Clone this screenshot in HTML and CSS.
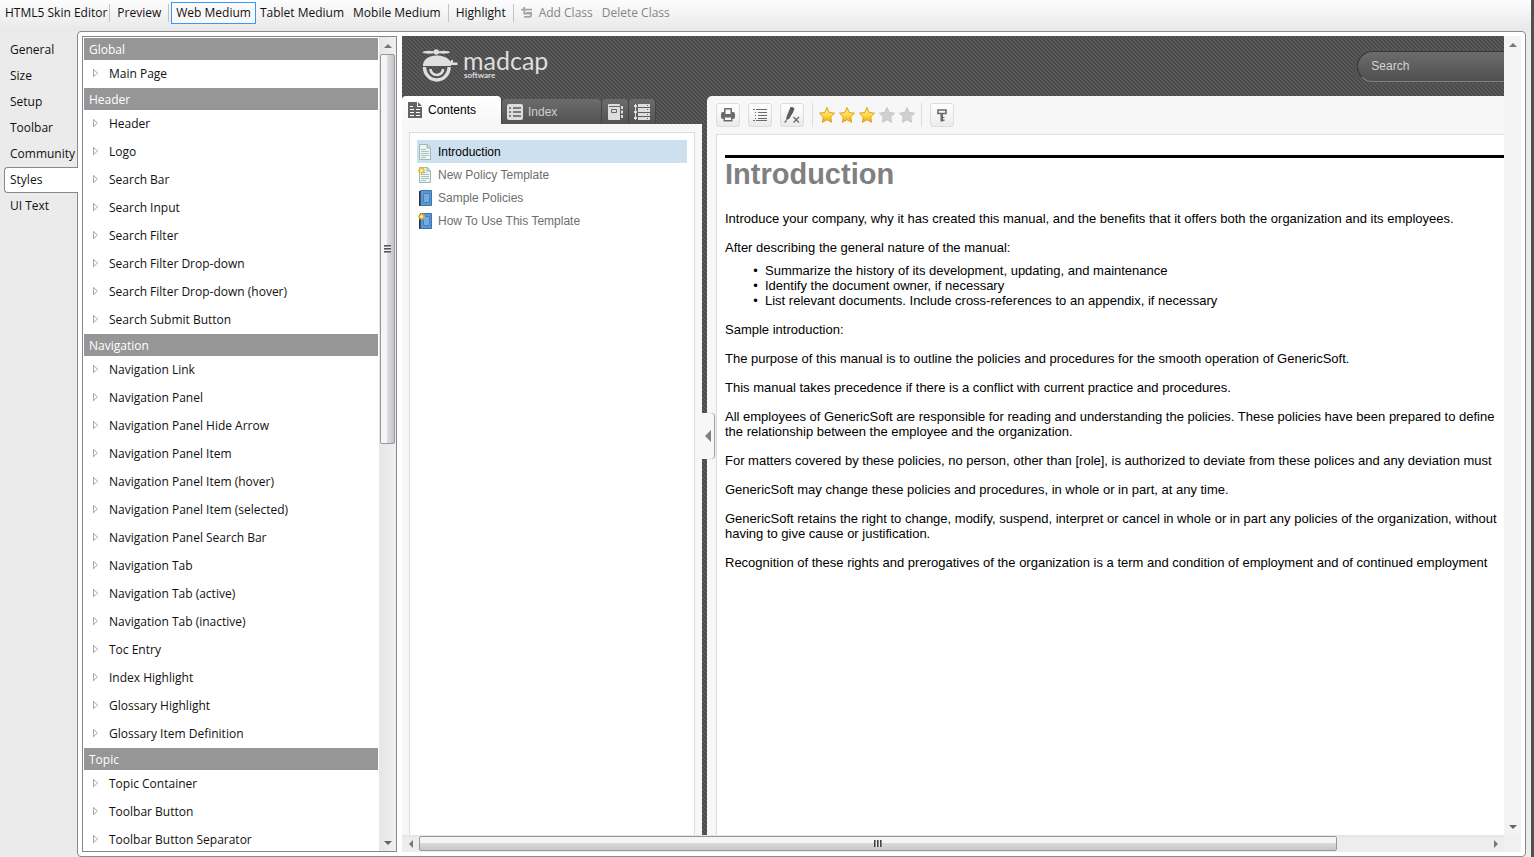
FILE: index.html
```html
<!DOCTYPE html>
<html lang="en">
<head>
<meta charset="utf-8">
<title>HTML5 Skin Editor</title>
<link rel="stylesheet" href="styles.css">
</head>
<body>
<div class="app">
  <header class="toolbar">
    <span class="tool-title">HTML5 Skin Editor</span>
    <span class="tool-sep"></span>
    <button class="tool" type="button">Preview</button>
    <span class="tool-sep"></span>
    <button class="tool tool-active" type="button">Web Medium</button>
    <button class="tool" type="button">Tablet Medium</button>
    <button class="tool" type="button">Mobile Medium</button>
    <span class="tool-sep"></span>
    <button class="tool" type="button">Highlight</button>
    <span class="tool-sep"></span>
    <button class="tool" type="button" disabled>
      <svg class="tool-icon" width="12" height="12" viewBox="0 0 12 12" fill="none" stroke="#a4a4a4" stroke-width="1.8"><path d="M0 2.700h11M3.300 0v6.500h5.500q1.500 0 1.500 1.500t-1.500 1.800H3M6 6h5"/></svg>Add Class</button>
    <button class="tool" type="button" disabled>Delete Class</button>
  </header>

  <div class="workspace">
    <nav class="side-tabs">
      <button class="side-tab" type="button">General</button>
      <button class="side-tab" type="button">Size</button>
      <button class="side-tab" type="button">Setup</button>
      <button class="side-tab" type="button">Toolbar</button>
      <button class="side-tab" type="button">Community</button>
      <button class="side-tab side-tab-active" type="button">Styles</button>
      <button class="side-tab" type="button">UI Text</button>
    </nav>

    <main class="panel">
      <section class="style-list">
        <div class="style-items">
          <h2 class="group">Global</h2>
          <ul class="entries"><li>Main Page</li></ul>
          <h2 class="group">Header</h2>
          <ul class="entries">
            <li>Header</li><li>Logo</li><li>Search Bar</li><li>Search Input</li><li>Search Filter</li>
            <li>Search Filter Drop-down</li><li>Search Filter Drop-down (hover)</li><li>Search Submit Button</li>
          </ul>
          <h2 class="group">Navigation</h2>
          <ul class="entries">
            <li>Navigation Link</li><li>Navigation Panel</li><li>Navigation Panel Hide Arrow</li>
            <li>Navigation Panel Item</li><li>Navigation Panel Item (hover)</li><li>Navigation Panel Item (selected)</li>
            <li>Navigation Panel Search Bar</li><li>Navigation Tab</li><li>Navigation Tab (active)</li>
            <li>Navigation Tab (inactive)</li><li>Toc Entry</li><li>Index Highlight</li>
            <li>Glossary Highlight</li><li>Glossary Item Definition</li>
          </ul>
          <h2 class="group">Topic</h2>
          <ul class="entries"><li>Topic Container</li><li>Toolbar Button</li><li>Toolbar Button Separator</li></ul>
        </div>
        <div class="vbar">
          <span class="arrow up"></span>
          <div class="vtrack"><div class="vthumb"><span class="grip"></span></div></div>
          <span class="arrow down"></span>
        </div>
      </section>

      <section class="preview">
        <div class="viewport">
          <div class="page">
            <header class="page-head">
              <svg class="logo" width="128" height="36" viewBox="0 0 128 36">
                <g fill="#dedede">
                  <ellipse cx="7" cy="3.200" rx="6.500" ry="1.500"/><ellipse cx="21.500" cy="3.200" rx="6.500" ry="1.500"/>
                  <circle cx="14.300" cy="3" r="2.700"/>
                  <path d="M1 15.500C2 10 7 6.500 14.300 6.500S26 9 28.500 12.500l1-1.500h1.500v2.500h4.500v2.500H29v1H1z"/>
                </g>
                <path fill="none" stroke="#dedede" stroke-width="3.400" d="M2.500 18a12.300 13 0 0 0 24.600 0"/>
                <path fill="none" stroke="#dedede" stroke-width="2.600" d="M8.500 20a6.300 6 0 0 0 12.600 0"/>
                <text class="logo-name" x="41" y="21">madcap</text>
                <text class="logo-sub" x="42" y="29">software</text>
              </svg>
              <input class="search" type="text" placeholder="Search" aria-label="Search">
            </header>
            <div class="page-body">
              <aside class="nav">
                <div class="nav-tabs">
                  <button class="nav-tab nav-tab-active" type="button">
                    <svg width="14" height="16" viewBox="0 0 14 16"><path fill="#646464" d="M0 0h9v5h5v11H0zM10 0l4 4h-4z"/><path stroke="#fff" d="M2 4.500h3M2 7.500h4M2 10.500h4M2 13.500h4M8 7.500h4M8 10.500h4M8 13.500h4"/></svg>Contents</button>
                  <button class="nav-tab nav-tab-index" type="button">
                    <svg width="16" height="16" viewBox="0 0 16 16"><rect width="16" height="16" rx="2" fill="#dedede"/><path stroke="#5c5c5c" stroke-width="1.500" d="M2 4h2M6 4h8M2 8h2M6 8h8M2 12h2M6 12h8"/></svg>Index</button>
                  <button class="nav-tab nav-tab-small" type="button" aria-label="Glossary">
                    <svg width="15" height="16" viewBox="0 0 15 16"><path fill="#dedede" d="M1 0h10q1 0 1 1v1H1v1h11v13H1q-1 0-1-1V1q0-1 1-1zM13 2h2v3h-2zM13 6.500h2v3h-2zM13 11h2v3h-2z"/><path fill="none" stroke="#666" d="M3.500 5.500h5v3h-5z"/></svg></button>
                  <button class="nav-tab nav-tab-small" type="button" aria-label="Browse sequences">
                    <svg width="16" height="16" viewBox="0 0 16 16"><path stroke="#dedede" d="M1.500 0v16"/><path fill="#dedede" d="M0 1h3v2H0zM0 7h3v2H0zM0 13h3v2H0zM4 0h12v3H4zM4 4h12v4H4zM4 9h12v3H4zM4 13h12v3H4z"/><path stroke="#666" d="M13 1.500h1M13 5.500h1M13 10.500h1M13 14.500h1"/></svg></button>
                </div>
                <div class="nav-panel">
                  <div class="toc">
                    <a class="toc-item toc-current" href="#"><svg width="14" height="16" viewBox="0 0 14 16"><use href="#sheet"/></svg>Introduction</a>
                    <a class="toc-item" href="#"><svg width="14" height="16" viewBox="0 0 14 16"><use href="#sheet"/><use href="#spark"/></svg>New Policy Template</a>
                    <a class="toc-item" href="#"><svg width="14" height="16" viewBox="0 0 14 16"><use href="#book"/></svg>Sample Policies</a>
                    <a class="toc-item" href="#"><svg width="14" height="16" viewBox="0 0 14 16"><use href="#book"/><use href="#spark"/></svg>How To Use This Template</a>
                  </div>
                </div>
                <button class="collapse" type="button" aria-label="Hide navigation"></button>
              </aside>
              <div class="topic">
                <div class="topic-tools">
                  <button class="tbtn" type="button" aria-label="Print"><svg width="14" height="14" viewBox="0 0 14 14"><path fill="#6a6a6a" d="M3 1q0-1 1-1h6q1 0 1 1v3h1q2 0 2 2v3q0 2-2 2H2q-2 0-2-2V6q0-2 2-2h1z"/><path fill="#f6f6f6" d="M4.500 1.500h5V6h-5z"/><path fill="#f6f6f6" stroke="#6a6a6a" stroke-width="1.400" d="M3.200 8.700h7.600v4H3.200z"/></svg></button>
                  <button class="tbtn" type="button" aria-label="Expand all"><svg width="14" height="14" viewBox="0 0 14 14"><path stroke="#6a6a6a" d="M0 1.500h2M3 1.500h11M2 4.500h1M5 4.500h9M2 7.500h1M5 7.500h9M2 10.500h1M5 10.500h9M0 12.500h2M3 12.500h11"/></svg></button>
                  <button class="tbtn" type="button" aria-label="Remove highlight"><svg width="16" height="16" viewBox="0 0 16 16"><path fill="#5c5c5c" d="M6.500 0h2l2 1.500-1.500 4L5 12l-3 1 .5-3zM1 14l1-1 1 1-1.500 1.500H0z"/><path stroke="#6a6a6a" stroke-width="1.300" d="M9.500 10l5.500 5.500M15 10l-5.500 5.500"/></svg></button>
                  <span class="tsep"></span>
                  <span class="stars">
                    <svg class="star on" viewBox="0 0 16 16"><use href="#star"/></svg>
                    <svg class="star on" viewBox="0 0 16 16"><use href="#star"/></svg>
                    <svg class="star on" viewBox="0 0 16 16"><use href="#star"/></svg>
                    <svg class="star" viewBox="0 0 16 16"><use href="#star"/></svg>
                    <svg class="star" viewBox="0 0 16 16"><use href="#star"/></svg>
                  </span>
                  <span class="tsep"></span>
                  <button class="tbtn" type="button" aria-label="Highlight"><svg width="10" height="13" viewBox="0 0 10 13"><path fill="none" stroke="#6a6a6a" stroke-width="1.600" d="M1 1h8v3.500H1z"/><path fill="#6a6a6a" d="M3.500 5H6v7.500H3.500zM6 8h1.500v1H6zM6 10.500h1.500v1.500H6z"/></svg></button>
                </div>
                <article class="content">
                  <h1>Introduction</h1>
                  <p>Introduce your company, why it has created this manual, and the benefits that it offers both the organization and its employees.</p>
                  <p class="lead">After describing the general nature of the manual:</p>
                  <ul>
                    <li>Summarize the history of its development, updating, and maintenance</li>
                    <li>Identify the document owner, if necessary</li>
                    <li>List relevant documents. Include cross-references to an appendix, if necessary</li>
                  </ul>
                  <p>Sample introduction:</p>
                  <p>The purpose of this manual is to outline the policies and procedures for the smooth operation of GenericSoft.</p>
                  <p>This manual takes precedence if there is a conflict with current practice and procedures.</p>
                  <p>All employees of GenericSoft are responsible for reading and understanding the policies. These policies have been prepared to define<br>the relationship between the employee and the organization.</p>
                  <p>For matters covered by these policies, no person, other than [role], is authorized to deviate from these polices and any deviation must</p>
                  <p>GenericSoft may change these policies and procedures, in whole or in part, at any time.</p>
                  <p>GenericSoft retains the right to change, modify, suspend, interpret or cancel in whole or in part any policies of the organization, without<br>having to give cause or justification.</p>
                  <p>Recognition of these rights and prerogatives of the organization is a term and condition of employment and of continued employment</p>
                </article>
              </div>
            </div>
          </div>
        </div>
        <div class="vbar vbar-idle"><span class="arrow up"></span><span class="arrow down"></span></div>
        <div class="hbar">
          <span class="arrow left"></span>
          <div class="htrack"><div class="hthumb"><span class="hgrip"></span></div></div>
          <span class="arrow right"></span>
        </div>
        <div class="corner"></div>
      </section>
    </main>
  </div>
</div>

<svg class="defs" width="0" height="0" aria-hidden="true">
  <defs>
    <linearGradient id="gold" x1="0" y1="0" x2="0" y2="1"><stop offset="0" stop-color="#ffe880"/><stop offset=".5" stop-color="#ffdc55"/><stop offset="1" stop-color="#f5a800"/></linearGradient>
    <path id="star" d="M8 .6l2.300 4.900 5.200.7-3.800 3.700.9 5.400L8 12.700l-4.600 2.600.9-5.400L.5 6.200l5.200-.7z"/>
    <g id="sheet"><path fill="#eef5f3" stroke="#9bb8b4" d="M1.500.5h8l3 3v12h-11z"/><path fill="#cfe0dc" stroke="#8fb5b0" d="M9 1v3h3"/><path stroke="#a5c4bf" d="M3 5.500h5M3 7.500h8M3 9.500h8M3 11.500h8M3 13.500h5"/></g>
    <g id="book"><path fill="#5b97d2" stroke="#3b72b0" d="M2.500.5h11v15h-11z"/><path fill="#30343c" d="M1 1h1.500v15H1z"/><path fill="#74ace0" stroke="#4680be" d="M5.500 3.500h6v9h-6z"/></g>
    <g id="spark"><path stroke="#e6b820" stroke-width="1.300" d="M3.500 0v7M0 3.500h7M1 1l5 5M6 1L1 6"/><circle cx="3.500" cy="3.500" r="1.500" fill="#fff6b0"/></g>
  </defs>
</svg>
</body>
</html>
```
FILE: styles.css
```css
* { box-sizing: border-box; }
body { margin: 0; font: 12px/16px "Open Sans", "Noto Sans", sans-serif; color: #111; background: #ebebeb; }
button { font: inherit; color: inherit; background: none; border: 0; padding: 0; margin: 0; }
ul { list-style: none; margin: 0; padding: 0; }
.defs { position: absolute; }

.app { height: 100vh; display: flex; flex-direction: column; border-right: 3px solid #505050; overflow: hidden; }
.toolbar { display: flex; align-items: center; height: 31px; padding: 0 0 6px 5px; background: linear-gradient(#fdfdfd, #e8e8e8); white-space: nowrap; }
.tool { height: 22px; padding: 0 4px; border: 1px solid transparent; display: flex; align-items: center; }
.tool + .tool { padding-left: 3px; }
.tool-active { border-color: #3399ff; background: #fafafa; }
.tool:disabled { color: #858585; }
.tool-icon { margin-right: 6px; }
.tool-sep { width: 1px; height: 18px; margin: 0 2px; background: #c4c4c4; }

.workspace { flex: 1; min-height: 0; display: flex; padding-right: 5px; }
.side-tabs { width: 77px; padding: 6px 0 0 4px; flex: none; }
.side-tab { display: block; width: 100%; height: 26px; padding: 0 0 0 6px; text-align: left; }
.side-tab-active { position: relative; width: 74px; border: 1px solid #888; border-right: 0; border-radius: 4px 0 0 4px; background: #fff; padding-left: 5px; }
.panel { flex: 1; min-width: 0; display: flex; gap: 5px; padding: 4px; border: 1px solid #888; border-radius: 4px; background: #fff; }

.style-list { width: 315px; flex: none; display: flex; border: 1px solid #828790; overflow: hidden; }
.style-items { flex: 1; padding: 1px; overflow: hidden; }
.group { margin: 0; height: 22px; padding: 0 5px; font: inherit; line-height: 23px; color: #fff; background: #969696; }
.entries li { display: flex; align-items: center; height: 28px; padding-left: 9px; }
.entries li::before { content: ""; width: 5px; height: 9px; margin: 0 11px 2px 0; background: #a6a6a6; clip-path: polygon(0 0, 100% 50%, 0 100%, 0 0, 1px 2px, 1px 7px, 4px 50%, 1px 2px); }

.vbar { width: 17px; flex: none; display: flex; flex-direction: column; align-items: center; background: linear-gradient(90deg, #e6e6e6, #f0f0f0); }
.vtrack { flex: 1; width: 15px; }
.vthumb { height: 50%; border: 1px solid #979797; border-radius: 2px; background: linear-gradient(90deg, #f5f5f5 0 45%, #dcdce0 50%, #c6c6ca); display: flex; align-items: center; justify-content: center; }
.grip { width: 7px; height: 8px; background: repeating-linear-gradient(#555 0 1px, #999 1px 2px, #eee 2px 3px); }
.arrow { width: 17px; height: 17px; flex: none; display: grid; place-items: center; }
.arrow::before { content: ""; border: 4px solid transparent; }
.up::before { border-top: 0; border-bottom-color: #777; }
.down::before { border-bottom: 0; border-top-color: #666; }
.left::before { border-left: 0; border-right-color: #777; }
.right::before { border-right: 0; border-left-color: #777; }

.preview { position: relative; flex: 1; min-width: 0; display: grid; grid-template: minmax(0, 1fr) 17px / minmax(0, 1fr) 17px; }
.vbar-idle { justify-content: space-between; background: #f3f3f3; }
.hbar { display: flex; background: linear-gradient(#e3e3e3, #ededed 20%); }
.htrack { flex: 1; padding: 1px 0; }
.hthumb { width: 86%; height: 15px; border: 1px solid #979797; border-radius: 2px; background: linear-gradient(#f5f5f5 0 45%, #d8d8dc 50%, #c8c8cc); display: grid; place-items: center; }
.hgrip { width: 8px; height: 7px; background: repeating-linear-gradient(90deg, #444 0 1px, #888 1px 2px, #eee 2px 3px); }
.corner { background: #f0f0f0; }

.viewport { overflow: hidden; }
.page { width: 116%; height: 100%; display: flex; flex-direction: column; font-family: "Liberation Sans", Arial, sans-serif; background: linear-gradient(45deg, #4a4a4a 25%, #5a5a5a 25% 50%, #4a4a4a 50% 75%, #5a5a5a 75%) 0 0 / 4px 4px; }
.page-head { height: 60px; flex: none; display: flex; align-items: flex-start; justify-content: space-between; padding: 13px 23px 0 20px; }
.logo { overflow: visible; }
.logo-name { font: 25px/25px Lato, sans-serif; fill: #dedede; }
.logo-sub { font: bold 8px/8px Lato, sans-serif; fill: #dedede; }
.search { width: 300px; height: 31px; margin-top: 2px; padding: 0 13px 2px; border: 1px solid #363636; border-bottom-color: #808080; border-radius: 16px; background: linear-gradient(#6c6c6c, #505050); font: 12px "Liberation Sans", Arial, sans-serif; color: #ddd; }
.search::placeholder { color: #d4d4d4; opacity: 1; }

.page-body { flex: 1; min-height: 0; display: flex; gap: 5px; }
.nav { width: 300px; flex: none; display: flex; flex-direction: column; }
.nav-tabs { display: flex; align-items: flex-end; gap: 1px; height: 28px; }
.nav-tab { display: flex; align-items: center; gap: 5px; height: 25px; padding: 0 5px; color: #d0d0d0; background: linear-gradient(#6c6c6c, #525252); border-radius: 4px 4px 0 0; box-shadow: 1px 0 0 #444; }
.nav-tab-index { width: 99px; }
.nav-tab-small { width: 26px; justify-content: center; }
.nav-tab-active { width: 99px; height: 28px; padding: 0 6px; gap: 6px; color: #000; background: linear-gradient(#fff, #f7f7f7); }
.nav-panel { flex: 1; display: flex; padding: 8px 7px 0; background: #f7f7f7; }
.toc { flex: 1; padding: 7px; border: 1px solid #ddd; border-bottom: 0; background: #fff; }
.toc-item { display: flex; align-items: center; gap: 6px; height: 23px; padding-left: 1px; color: #6e6e6e; text-decoration: none; }
.toc-current { color: #000; background: #cde0ef; }
.collapse { position: absolute; left: 300px; top: calc(50% - 31px); width: 12px; height: 46px; border-radius: 0 4px 4px 0; background: #f7f7f7; box-shadow: 1px 0 1px #999; display: grid; place-items: center; }
.collapse::before { content: ""; border: 6px solid transparent; border-left: 0; border-right-color: #808080; }

.topic { flex: 1; min-width: 0; display: flex; flex-direction: column; padding: 7px 9px 0; background: #f7f7f7; border-radius: 5px 0 0 0; }
.topic-tools { display: flex; align-items: center; gap: 8px; height: 24px; margin-bottom: 7px; }
.tbtn { width: 24px; height: 24px; display: grid; place-items: center; border: 1px solid #ddd; border-radius: 3px; background: linear-gradient(#fff, #ececec); }
.tsep { width: 1px; height: 24px; background: #ddd; }
.stars { display: flex; gap: 4px; margin: 0 -2px; }
.star { width: 16px; height: 16px; fill: #d0d0d0; stroke: #c4c4c4; }
.star.on { fill: url(#gold); stroke: #dfa01c; }
.content { flex: 1; min-height: 0; padding: 20px 8px 0; border: 1px solid #ddd; border-bottom: 0; background: #fff; font-size: 13px; line-height: 15px; color: #000; white-space: nowrap; }
.content h1 { margin: 0 0 20px; border-top: 3px solid #000; font-size: 29px; line-height: 33px; color: #808080; }
.content p { margin: 0 0 14px; }
.content .lead { margin-bottom: 8px; }
.content ul { margin-bottom: 14px; padding-left: 40px; list-style: disc; }
.content li::marker { content: "•\00a0\00a0"; }
```
